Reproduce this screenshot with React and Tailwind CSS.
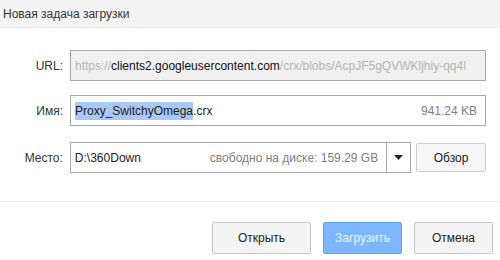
import React from 'react';

export default function App() {
  return (
    <div className="w-[500px] h-[260px] bg-white text-[12px] text-[#222] font-['Liberation_Sans',Arial,sans-serif] overflow-hidden">
      {/* Title bar */}
      <div className="h-[28px] bg-[#f4f4f4] border-b border-[#e8e8e8] pl-[3px] flex items-center text-[12px] text-[#333]">
        Новая задача загрузки
      </div>

      <div className="pt-[22px] pr-[14px]">
        {/* URL */}
        <div className="flex items-center">
          <div className="w-[63px] text-right text-[#333]">URL:</div>
          <div className="ml-[7px] flex-1 h-[31px] border border-[#a9a9a9] bg-[#f0f0f0] flex items-center pl-[4px] overflow-hidden whitespace-nowrap">
            <span className="text-[#b5b5b5]">https://</span>
            <span className="text-[#111]">clients2.googleusercontent.com</span>
            <span className="text-[#b5b5b5]">/crx/blobs/AcpJF5gQVWKljhiy-qq4l</span>
          </div>
        </div>

        {/* Name */}
        <div className="flex items-center mt-[14px]">
          <div className="w-[63px] text-right text-[#333]">Имя:</div>
          <div className="ml-[7px] flex-1 h-[31px] border border-[#a9a9a9] bg-white flex items-center pl-[4px] pr-[8px] whitespace-nowrap">
            <span className="bg-[#a9c8f5]">Proxy_SwitchyOmega</span>
            <span>.crx</span>
            <span className="ml-auto text-[#808080]">941.24 KB</span>
          </div>
        </div>

        {/* Location */}
        <div className="flex items-center mt-[16px]">
          <div className="w-[63px] text-right text-[#333]">Место:</div>
          <div className="ml-[7px] w-[342px] h-[31px] border border-[#a9a9a9] bg-white flex items-stretch whitespace-nowrap">
            <div className="flex-1 flex items-center pl-[4px] pr-[8px]">
              <span>D:\360Down</span>
              <span className="ml-auto text-[#808080]">свободно на диске: 159.29 GB</span>
            </div>
            <div className="w-[24px] border-l border-[#a9a9a9] flex items-center justify-center">
              <svg width="9" height="5" viewBox="0 0 9 5">
                <path d="M0 0H9L4.5 5Z" fill="#222" />
              </svg>
            </div>
          </div>
          <button className="ml-[5px] w-[70px] h-[29px] bg-[#f6f6f6] border border-[#cfcfcf] rounded-[2px] text-[#222]">
            Обзор
          </button>
        </div>
      </div>

      {/* Separator */}
      <div className="mt-[28px] border-t border-[#ececec]"></div>

      {/* Buttons */}
      <div className="flex justify-end gap-[12px] pr-[7px] pt-[20px]">
        <button className="w-[99px] h-[32px] bg-[#f4f4f4] border border-[#c6c6c6] rounded-[2px] text-[#222]">
          Открыть
        </button>
        <button className="w-[79px] h-[32px] bg-[#7db6fc] border border-[#5da2f6] rounded-[2px] text-[#eef5ff]">
          Загрузить
        </button>
        <button className="w-[79px] h-[32px] bg-[#f4f4f4] border border-[#c6c6c6] rounded-[2px] text-[#222]">
          Отмена
        </button>
      </div>
    </div>
  );
}
